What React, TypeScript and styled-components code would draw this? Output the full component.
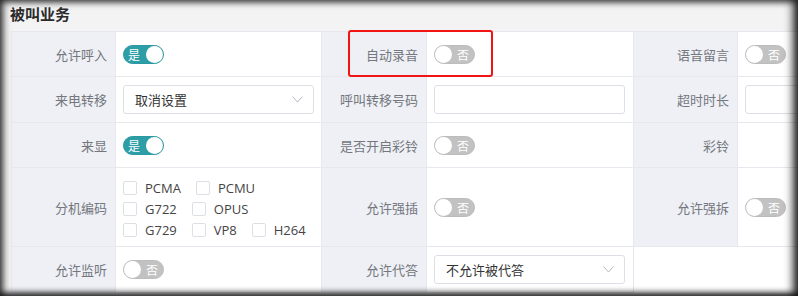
import styled, { createGlobalStyle } from "styled-components";

const GlobalStyle = createGlobalStyle`
  html, body {
    margin: 0;
    padding: 0;
    background: #f3f3f4;
  }
  body {
    font-family: "Noto Sans CJK SC", "Noto Sans", sans-serif;
  }
`;

type Field =
  | { kind: "switch"; on: boolean }
  | { kind: "select"; value: string }
  | { kind: "input" }
  | { kind: "codecs" }
  | { kind: "empty" };

interface Pair {
  label: string;
  field: Field;
}

const rows: { height: number; pairs: Pair[] }[] = [
  {
    height: 45,
    pairs: [
      { label: "允许呼入", field: { kind: "switch", on: true } },
      { label: "自动录音", field: { kind: "switch", on: false } },
      { label: "语音留言", field: { kind: "switch", on: false } },
    ],
  },
  {
    height: 46,
    pairs: [
      { label: "来电转移", field: { kind: "select", value: "取消设置" } },
      { label: "呼叫转移号码", field: { kind: "input" } },
      { label: "超时时长", field: { kind: "input" } },
    ],
  },
  {
    height: 45,
    pairs: [
      { label: "来显", field: { kind: "switch", on: true } },
      { label: "是否开启彩铃", field: { kind: "switch", on: false } },
      { label: "彩铃", field: { kind: "empty" } },
    ],
  },
  {
    height: 79,
    pairs: [
      { label: "分机编码", field: { kind: "codecs" } },
      { label: "允许强插", field: { kind: "switch", on: false } },
      { label: "允许强拆", field: { kind: "switch", on: false } },
    ],
  },
  {
    height: 46,
    pairs: [
      { label: "允许监听", field: { kind: "switch", on: false } },
      { label: "允许代答", field: { kind: "select", value: "不允许被代答" } },
    ],
  },
];

const codecs = ["PCMA", "PCMU", "G722", "OPUS", "G729", "VP8", "H264"];

const Chevron = () => (
  <svg width="11" height="7" viewBox="0 0 11 7">
    <polyline points="0.5,0.5 5.5,6 10.5,0.5" fill="none" stroke="#b4b8c0" strokeWidth="1" />
  </svg>
);

const renderField = (field: Field) => {
  switch (field.kind) {
    case "switch":
      return (
        <Switch $on={field.on}>
          <SwitchText $on={field.on}>{field.on ? "是" : "否"}</SwitchText>
          <Knob $on={field.on} />
        </Switch>
      );
    case "select":
      return (
        <SelectBox>
          <span>{field.value}</span>
          <Chevron />
        </SelectBox>
      );
    case "input":
      return <InputBox />;
    case "codecs":
      return (
        <CodecList>
          {codecs.map((c) => (
            <CodecItem key={c}>
              <CheckBox />
              {c}
            </CodecItem>
          ))}
        </CodecList>
      );
    default:
      return null;
  }
};

export default function App() {
  return (
    <Page>
      <GlobalStyle />
      <Title>被叫业务</Title>
      <Table>
        {rows.map((row, ri) => (
          <Row key={ri} $height={row.height}>
            {row.pairs.map((p) => (
              <Pair key={p.label} p={p} />
            ))}
            {row.pairs.length < 3 && <FillCell />}
          </Row>
        ))}
      </Table>
      <Highlight />
    </Page>
  );
}

const Pair = ({ p }: { p: Pair }) => (
  <>
    <LabelCell>{p.label}</LabelCell>
    <ValueCell>{renderField(p.field)}</ValueCell>
  </>
);

const Page = styled.div`
  position: relative;
  width: 798px;
  height: 296px;
  overflow: hidden;
  background: #f3f3f4;
  padding: 0 0 0 11px;
  box-sizing: border-box;

  &::after {
    content: "";
    position: absolute;
    inset: 0;
    pointer-events: none;
    box-shadow: inset 0 0 7px 2px rgba(0, 0, 0, 0.7),
      inset 6px 0 8px -3px rgba(0, 0, 0, 0.35),
      inset -8px 0 8px -2px rgba(0, 0, 0, 0.55),
      inset 0 -5px 6px -2px rgba(0, 0, 0, 0.45);
  }
`;

const Title = styled.div`
  height: 31px;
  margin-left: -1px;
  line-height: 27px;
  font-size: 15px;
  font-weight: 700;
  color: #2a2a2a;
`;

const Table = styled.div`
  width: 1040px;
  border-top: 1px solid #e6e8ee;
  border-left: 1px solid #e6e8ee;
  background: #fff;
`;

const Row = styled.div<{ $height: number }>`
  display: grid;
  grid-template-columns: 104px 206px 105px 207px 104px 206px;
  height: ${(p) => p.$height}px;
`;

const LabelCell = styled.div`
  display: flex;
  align-items: center;
  justify-content: flex-end;
  padding-right: 8px;
  background: #eef0f5;
  border-right: 1px solid #e6e8ee;
  border-bottom: 1px solid #e6e8ee;
  font-size: 13px;
  color: #74777d;
`;

const ValueCell = styled.div`
  display: flex;
  align-items: center;
  padding-left: 7px;
  background: #fff;
  border-right: 1px solid #e6e8ee;
  border-bottom: 1px solid #e6e8ee;
`;

const FillCell = styled.div`
  grid-column: span 2;
  background: #fff;
`;

const Switch = styled.div<{ $on: boolean }>`
  position: relative;
  width: 41px;
  height: 19px;
  border-radius: 10px;
  background: ${(p) => (p.$on ? "#2e9ea6" : "#c2c2c2")};
  box-sizing: border-box;
  border: 1px solid ${(p) => (p.$on ? "#2a98a0" : "#bcbcbc")};
`;

const SwitchText = styled.span<{ $on: boolean }>`
  position: absolute;
  top: 0;
  ${(p) => (p.$on ? "left: 4px;" : "right: 5px;")}
  line-height: 17px;
  font-size: 12px;
  color: #fff;
`;

const Knob = styled.span<{ $on: boolean }>`
  position: absolute;
  top: 0;
  ${(p) => (p.$on ? "right: 0;" : "left: 0;")}
  width: 17px;
  height: 17px;
  border-radius: 50%;
  background: #fff;
`;

const SelectBox = styled.div`
  width: 191px;
  height: 29px;
  box-sizing: border-box;
  border: 1px solid #dcdfe6;
  border-radius: 3px;
  display: flex;
  align-items: center;
  justify-content: space-between;
  padding: 0 10px 0 11px;
  font-size: 13px;
  color: #333;
  background: #fff;
`;

const InputBox = styled.div`
  width: 191px;
  height: 29px;
  box-sizing: border-box;
  border: 1px solid #dcdfe6;
  border-radius: 3px;
  background: #fff;
`;

const CodecList = styled.div`
  display: flex;
  flex-wrap: wrap;
  width: 194px;
  column-gap: 15px;
  padding-top: 3px;
`;

const CodecItem = styled.label`
  display: flex;
  align-items: center;
  height: 21px;
  font-size: 13px;
  color: #444;
  font-family: "Open Sans", "Noto Sans", sans-serif;
`;

const CheckBox = styled.span`
  width: 14px;
  height: 14px;
  box-sizing: border-box;
  border: 1px solid #dcdfe6;
  border-radius: 2px;
  background: #fff;
  margin-right: 8px;
`;

const Highlight = styled.div`
  position: absolute;
  left: 348px;
  top: 30px;
  width: 145px;
  height: 47px;
  box-sizing: border-box;
  border: 2px solid #f01414;
  border-radius: 3px;
`;
